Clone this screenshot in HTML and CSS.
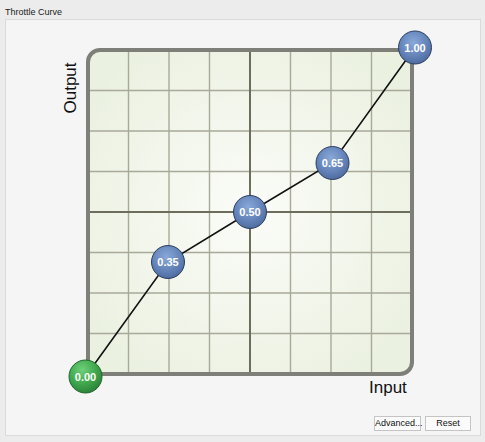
FILE: index.html
```html
<!DOCTYPE html>
<html>
<head>
<meta charset="utf-8">
<link rel="stylesheet" href="styles.css">
</head>
<body>
<div class="window">
  <div class="group-title">Throttle Curve</div>
  <div class="group">
    <svg class="curve" width="475" height="392" viewBox="6 20 475 392" xmlns="http://www.w3.org/2000/svg">
      <defs>
        <radialGradient id="bg" cx="50%" cy="50%" r="60%">
          <stop offset="0" stop-color="#fbfcf8"/>
          <stop offset="1" stop-color="#ebf1e1"/>
        </radialGradient>
        <radialGradient id="blue" cx="45%" cy="35%" r="70%">
          <stop offset="0" stop-color="#8aa8d8"/>
          <stop offset="0.6" stop-color="#6383b9"/>
          <stop offset="1" stop-color="#4a679a"/>
        </radialGradient>
        <radialGradient id="green" cx="40%" cy="30%" r="70%">
          <stop offset="0" stop-color="#6fd07a"/>
          <stop offset="0.55" stop-color="#42ab4f"/>
          <stop offset="1" stop-color="#2e8539"/>
        </radialGradient>
      </defs>
      <rect x="88" y="50" width="324" height="324" rx="12" fill="url(#bg)"/>
      <g class="grid">
        <line x1="128.5" y1="50" x2="128.5" y2="374"/>
        <line x1="169" y1="50" x2="169" y2="374"/>
        <line x1="209.5" y1="50" x2="209.5" y2="374"/>
        <line x1="290.5" y1="50" x2="290.5" y2="374"/>
        <line x1="331" y1="50" x2="331" y2="374"/>
        <line x1="371.5" y1="50" x2="371.5" y2="374"/>
        <line x1="88" y1="90.5" x2="412" y2="90.5"/>
        <line x1="88" y1="131" x2="412" y2="131"/>
        <line x1="88" y1="171.5" x2="412" y2="171.5"/>
        <line x1="88" y1="252.5" x2="412" y2="252.5"/>
        <line x1="88" y1="293" x2="412" y2="293"/>
        <line x1="88" y1="333.5" x2="412" y2="333.5"/>
      </g>
      <g class="axis">
        <line x1="250" y1="50" x2="250" y2="374"/>
        <line x1="88" y1="212" x2="412" y2="212"/>
      </g>
      <rect class="frame" x="88" y="50" width="324" height="324" rx="12"/>
      <text class="label" transform="translate(76 88) rotate(-90)" text-anchor="middle">Output</text>
      <text class="label" x="369" y="393">Input</text>
      <polyline class="curve-line" points="85.5,376.5 168,262 250,212 332.5,162.5 415,47.5"/>
      <g class="pt">
        <circle cx="85.5" cy="376.5" r="16.5" fill="url(#green)" stroke="#22662c"/>
        <text x="85.5" y="380.5">0.00</text>
      </g>
      <g class="pt">
        <circle cx="168" cy="262" r="16.5" fill="url(#blue)" stroke="#2c3f60"/>
        <text x="168" y="266">0.35</text>
      </g>
      <g class="pt">
        <circle cx="250" cy="212" r="16.5" fill="url(#blue)" stroke="#2c3f60"/>
        <text x="250" y="216">0.50</text>
      </g>
      <g class="pt">
        <circle cx="332.5" cy="163" r="16.5" fill="url(#blue)" stroke="#2c3f60"/>
        <text x="332.5" y="167">0.65</text>
      </g>
      <g class="pt">
        <circle cx="415" cy="47.5" r="16.5" fill="url(#blue)" stroke="#2c3f60"/>
        <text x="415" y="51.5">1.00</text>
      </g>
    </svg>
    <div class="buttons">
      <button class="btn">Advanced...</button>
      <button class="btn btn-reset">Reset</button>
    </div>
  </div>
</div>
</body>
</html>
```

FILE: styles.css
```css
html, body {
  margin: 0;
  padding: 0;
  background: #ececec;
  font-family: "Liberation Sans", Arial, sans-serif;
}
.window {
  width: 485px;
  height: 442px;
  box-sizing: border-box;
  padding: 6px 4px 0 5px;
  display: flex;
  flex-direction: column;
}
.group-title {
  font-size: 9px;
  line-height: 12px;
  color: #1a1a1a;
  margin-bottom: 1px;
}
.group {
  height: 417px;
  box-sizing: border-box;
  border: 1px solid #dadada;
  background: #f5f5f5;
  display: flex;
  flex-direction: column;
}
.curve {
  display: block;
}
.grid line {
  stroke: #a9a999;
  stroke-width: 1.4;
}
.axis line {
  stroke: #6d6d5c;
  stroke-width: 2;
}
.frame {
  fill: none;
  stroke: #7f7f7a;
  stroke-width: 4;
}
.label {
  font-family: "Liberation Sans", Arial, sans-serif;
  font-size: 17px;
  fill: #111;
}
.curve-line {
  fill: none;
  stroke: #111;
  stroke-width: 1.6;
}
.pt text {
  font-family: "Liberation Sans", Arial, sans-serif;
  font-size: 11px;
  font-weight: bold;
  fill: #fff;
  text-anchor: middle;
}
.buttons {
  display: flex;
  justify-content: flex-end;
  gap: 4px;
  padding-right: 9px;
  margin-top: 4px;
}
.btn {
  height: 15px;
  padding: 0;
  border: 1px solid #c4c4c4;
  background: #fbfbfb;
  font-family: "Liberation Sans", Arial, sans-serif;
  font-size: 9px;
  color: #111;
  width: 47px;
  line-height: 13px;
}
.btn-reset {
  width: 46px;
}
```
